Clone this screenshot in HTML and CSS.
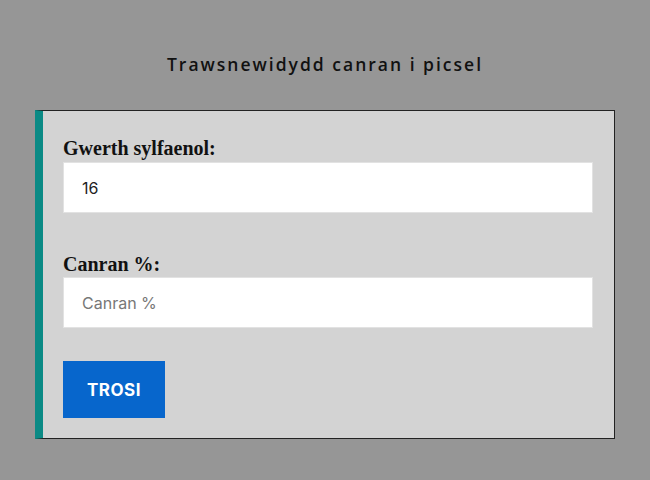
FILE: index.html
```html
<!DOCTYPE html>
<html>
<head>
<meta charset="utf-8">
<link rel="stylesheet" href="styles.css">
</head>
<body>
<h1 class="title">Trawsnewidydd canran i picsel</h1>
<form class="card">
  <label class="label" for="base">Gwerth sylfaenol:</label>
  <input class="field" id="base" type="text" value="16">
  <label class="label label-second" for="pct">Canran %:</label>
  <input class="field" id="pct" type="text" placeholder="Canran %">
  <button class="btn" type="button">TROSI</button>
</form>
</body>
</html>
```
FILE: styles.css
```css
html, body {
  margin: 0;
  padding: 0;
}
body {
  background: #969696;
  width: 650px;
  height: 480px;
  overflow: hidden;
}
.title {
  margin: 0;
  padding-top: 52px;
  height: 58px;
  box-sizing: border-box;
  text-align: center;
  font-family: "Open Sans", sans-serif;
  font-weight: 600;
  font-size: 17.5px;
  line-height: 24px;
  letter-spacing: 2px;
  color: #111;
}
.card {
  margin: 52px 0 0 35px;
  width: 580px;
  box-sizing: border-box;
  background: #d3d3d3;
  border: 1px solid #222;
  border-left: 8px solid #0b8a85;
  padding: 26px 20px 20px 20px;
  display: flex;
  flex-direction: column;
  align-items: flex-start;
}
.label {
  font-family: "Liberation Serif", serif;
  font-weight: bold;
  font-size: 20px;
  line-height: 22px;
  color: #111;
  margin-bottom: 3px;
}
.label-second {
  margin-top: 40px;
  margin-bottom: 2px;
}
.field {
  width: 530px;
  height: 51px;
  box-sizing: border-box;
  border: 1px solid #e2e2e2;
  background: #fff;
  padding: 0 18px;
  font-family: Inter, sans-serif;
  font-size: 16px;
  color: #222;
  outline: none;
}
.field::placeholder {
  color: #777;
}
.btn {
  margin-top: 33px;
  width: 102px;
  height: 57px;
  border: none;
  background: #0766cc;
  color: #fff;
  font-family: Inter, sans-serif;
  font-weight: bold;
  font-size: 17px;
  letter-spacing: 0.5px;
  cursor: pointer;
}
```
